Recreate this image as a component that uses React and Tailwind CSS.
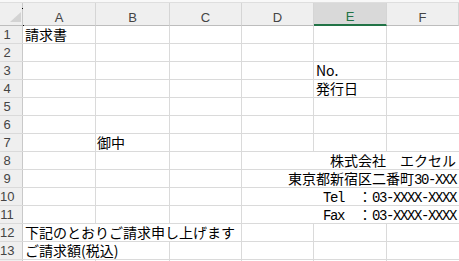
import clsx from 'clsx';

// Excel-like sheet: 請求書 template
const jp = "font-['Noto_Sans_CJK_JP','Noto_Sans_CJK_SC',sans-serif]";
const mono = "font-['Liberation_Mono','DejaVu_Sans_Mono',monospace] tracking-[-1.4px]";

function Cell({ w, line = true, className = '', children }) {
  return (
    <div
      className={clsx(
        'h-full shrink-0 whitespace-nowrap text-[14px] leading-[17px] text-black',
        jp,
        w,
        line && 'border-r border-[#dadada]',
        className
      )}
    >
      {children}
    </div>
  );
}

function Row({ n, children }) {
  return (
    <div className="flex h-[18px] border-b border-[#dadada]">
      <div className="w-[23px] shrink-0 border-r border-[#c9c9c9] bg-[#efefef] pr-[8px] text-center font-['Liberation_Sans',sans-serif] text-[13px] leading-[17px] text-[#444]">
        {n}
      </div>
      {children}
    </div>
  );
}

function EmptyCells({ from = 'A' }) {
  const all = [
    ['A', 'w-[73px]'],
    ['B', 'w-[74px]'],
    ['C', 'w-[72px]'],
    ['D', 'w-[72px]'],
    ['E', 'w-[73px]'],
  ];
  const start = all.findIndex((c) => c[0] === from);
  return (
    <>
      {all.slice(start).map(([k, w]) => (
        <Cell key={k} w={w} />
      ))}
      <Cell w="flex-1" line={false} />
    </>
  );
}

function HeaderCell({ w, active, children }) {
  return (
    <div
      className={clsx(
        "flex h-full shrink-0 items-end justify-center border-r border-[#d5d5d5] font-['Liberation_Sans',sans-serif] text-[13px] leading-[14px]",
        w,
        active
          ? 'border-b-2 border-b-[#217346] bg-[#d9d9d9] text-[#217346]'
          : 'border-b border-b-[#bdbdbd] bg-[#efefef] text-[#444]'
      )}
    >
      {children}
    </div>
  );
}

export default function App() {
  return (
    <div className="relative h-[261px] w-[459px] overflow-hidden bg-white">
      <div className="h-[3px] border-b border-[#dedede] bg-[#f8f8f8]" />

      {/* column headers */}
      <div className="flex h-[23px]">
        <div className="flex h-full w-[23px] shrink-0 items-end justify-end border-r border-b border-r-[#c9c9c9] border-b-[#bdbdbd] bg-[#efefef] pr-px pb-[3px]">
          <svg width="11" height="10" viewBox="0 0 11 10">
            <polygon points="11,0 11,10 0,10" fill="#d3d3d3" />
          </svg>
        </div>
        <HeaderCell w="w-[73px]">A</HeaderCell>
        <HeaderCell w="w-[74px]">B</HeaderCell>
        <HeaderCell w="w-[72px]">C</HeaderCell>
        <HeaderCell w="w-[72px]">D</HeaderCell>
        <HeaderCell w="w-[73px]" active>E</HeaderCell>
        <HeaderCell w="flex-1">F</HeaderCell>
      </div>

      <Row n={1}>
        <Cell w="w-[73px]" className="pl-[2px]">請求書</Cell>
        <EmptyCells from="B" />
      </Row>
      <Row n={2}>
        <EmptyCells />
      </Row>
      <Row n={3}>
        <Cell w="w-[73px]" />
        <Cell w="w-[74px]" />
        <Cell w="w-[72px]" />
        <Cell w="w-[72px]" />
        <Cell w="w-[73px]" className="pl-[2px]">No.</Cell>
        <Cell w="flex-1" line={false} />
      </Row>
      <Row n={4}>
        <Cell w="w-[73px]" />
        <Cell w="w-[74px]" />
        <Cell w="w-[72px]" />
        <Cell w="w-[72px]" />
        <Cell w="w-[73px]" className="pl-[2px]">発行日</Cell>
        <Cell w="flex-1" line={false} />
      </Row>
      <Row n={5}>
        <EmptyCells />
      </Row>
      <Row n={6}>
        <EmptyCells />
      </Row>
      <Row n={7}>
        <Cell w="w-[73px]" />
        <Cell w="w-[74px]" className="pl-px">御中</Cell>
        <EmptyCells from="C" />
      </Row>
      <Row n={8}>
        <Cell w="w-[73px]" />
        <Cell w="w-[74px]" />
        <Cell w="w-[72px]" />
        <Cell w="flex-1" line={false} className="pr-[3px] text-right">
          株式会社　エクセル
        </Cell>
      </Row>
      <Row n={9}>
        <Cell w="w-[73px]" />
        <Cell w="w-[74px]" />
        <Cell w="w-[72px]" />
        <Cell w="flex-1" line={false} className="pr-[3px] text-right">
          東京都新宿区二番町<span className={mono}>30-XXX</span>
        </Cell>
      </Row>
      <Row n={10}>
        <Cell w="w-[73px]" />
        <Cell w="w-[74px]" />
        <Cell w="w-[72px]" />
        <Cell w="flex-1" line={false} className="pr-[3px] text-right">
          <span className={mono}>Tel</span>　：<span className={mono}>03-XXXX-XXXX</span>
        </Cell>
      </Row>
      <Row n={11}>
        <Cell w="w-[73px]" />
        <Cell w="w-[74px]" />
        <Cell w="w-[72px]" />
        <Cell w="flex-1" line={false} className="pr-[3px] text-right">
          <span className={mono}>Fax</span>　：<span className={mono}>03-XXXX-XXXX</span>
        </Cell>
      </Row>
      <Row n={12}>
        <Cell w="w-[219px]" className="pl-[2px]">下記のとおりご請求申し上げます</Cell>
        <EmptyCells from="D" />
      </Row>
      <Row n={13}>
        <Cell w="w-[147px]" className="pl-[2px]">ご請求額(税込)</Cell>
        <EmptyCells from="C" />
      </Row>
      {/* row 14 is only a sliver at the bottom edge */}
      <Row>
        <EmptyCells />
      </Row>

      {/* stray cursor pixels */}
      <div className="absolute left-[22px] top-[8px] h-px w-px bg-black" />
      <div className="absolute left-[23px] top-[25px] h-px w-px bg-black" />
    </div>
  );
}
